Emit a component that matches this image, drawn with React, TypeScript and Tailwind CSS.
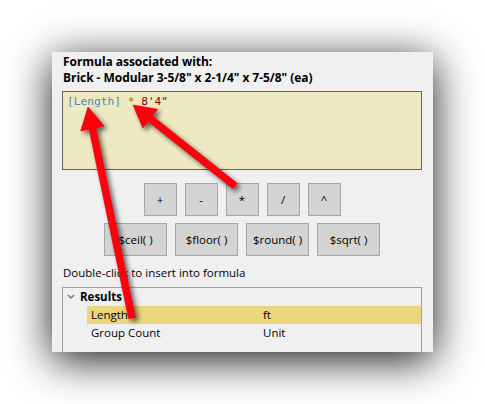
import React from "react";

type Pt = [number, number];

function arrowPoints(tail: Pt, tip: Pt, shaft = 7, headW = 24, headL = 22): string {
  const dx = tip[0] - tail[0];
  const dy = tip[1] - tail[1];
  const len = Math.hypot(dx, dy);
  const ux = dx / len;
  const uy = dy / len;
  const nx = -uy;
  const ny = ux;
  const bx = tip[0] - ux * headL;
  const by = tip[1] - uy * headL;
  const s = shaft / 2;
  const h = headW / 2;
  const pts: Pt[] = [
    [tail[0] + nx * s, tail[1] + ny * s],
    [bx + nx * s, by + ny * s],
    [bx + nx * h, by + ny * h],
    [tip[0], tip[1]],
    [bx - nx * h, by - ny * h],
    [bx - nx * s, by - ny * s],
    [tail[0] - nx * s, tail[1] - ny * s],
  ];
  return pts.map((p) => `${p[0].toFixed(1)},${p[1].toFixed(1)}`).join(" ");
}

const ui = { fontFamily: '"Open Sans", "Noto Sans", sans-serif' };
const mono = { fontFamily: '"DejaVu Sans Mono", "Liberation Mono", monospace' };

function Btn({ children, wide }: { children: React.ReactNode; wide?: boolean }) {
  return (
    <div
      className={`${wide ? "w-[63px]" : "w-[33px]"} h-[33px] flex items-center justify-center bg-[#d4d4d4] border border-[#a6a6a6] text-[11.5px] text-black`}
    >
      {children}
    </div>
  );
}

export default function App() {
  const a1 = arrowPoints([132, 318], [88, 107]);
  const a2 = arrowPoints([235, 186], [133, 105]);
  return (
    <div className="relative w-[485px] h-[404px] bg-white overflow-hidden" style={ui}>
      <div className="pl-[52px] pt-[52px]">
        <div className="w-[381px] h-[300px] bg-[#f0f0f0] overflow-hidden shadow-[0_8px_40px_rgba(0,0,0,0.9)]">
          <div className="pl-[11px] pt-[2px] text-[12px] leading-[16px] font-bold text-black tracking-[-0.05px]">
            <div>Formula associated with:</div>
            <div>Brick - Modular 3-5/8" x 2-1/4" x 7-5/8" (ea)</div>
          </div>
          <div className="ml-[10px] mt-[5px] w-[360px] h-[79px] border border-[#646464] bg-[#efe9c1] px-[4px] pt-[2px]">
            <div className="text-[11.2px] leading-[15px]" style={mono}>
              <span className="text-[#5287b8]">[Length]</span>
              <span> </span>
              <span className="text-[#8a6a10]">*</span>
              <span> </span>
              <span className="text-[#800000]">8'4"</span>
            </div>
          </div>
          <div className="ml-[10px] w-[360px] mt-[13px] flex justify-center gap-[8px]">
            <Btn>+</Btn>
            <Btn>-</Btn>
            <Btn>*</Btn>
            <Btn>/</Btn>
            <Btn>^</Btn>
          </div>
          <div className="ml-[10px] w-[360px] mt-[7px] flex justify-center gap-[8px]">
            <Btn wide>$ceil( )</Btn>
            <Btn wide>$floor( )</Btn>
            <Btn wide>$round( )</Btn>
            <Btn wide>$sqrt( )</Btn>
          </div>
          <div className="pl-[11px] mt-[9px] text-[11.5px] leading-[15px] text-black">
            Double-click to insert into formula
          </div>
          <div className="ml-[10px] mt-[7px] w-[360px] h-[80px] border border-[#a0a0a8] bg-[#f0f0f0] text-[11.5px] text-black">
            <div className="flex items-center h-[18px]">
              <svg width="8" height="6" viewBox="0 0 8 6" className="ml-[4px] mr-[5px]">
                <path d="M1 1 L4 4 L7 1" stroke="#7a7a7a" strokeWidth="1.5" fill="none" />
              </svg>
              <span className="font-bold">Results</span>
            </div>
            <div className="ml-[24px] h-[18px] flex items-center bg-[#ebd67b]">
              <span className="pl-[4px] w-[176px]">Length</span>
              <span>ft</span>
            </div>
            <div className="ml-[24px] h-[18px] flex items-center">
              <span className="pl-[4px] w-[176px]">Group Count</span>
              <span>Unit</span>
            </div>
          </div>
        </div>
      </div>
      <svg className="absolute left-0 top-0" width="485" height="404" viewBox="0 0 485 404">
        <defs>
          <filter id="sh" x="-30%" y="-30%" width="160%" height="160%">
            <feGaussianBlur in="SourceAlpha" stdDeviation="2.5" />
            <feOffset dx="3" dy="3" result="b" />
            <feComponentTransfer>
              <feFuncA type="linear" slope="0.6" />
            </feComponentTransfer>
            <feMerge>
              <feMergeNode />
              <feMergeNode in="SourceGraphic" />
            </feMerge>
          </filter>
        </defs>
        <g filter="url(#sh)">
          <polygon points={a1} fill="#ff0010" stroke="#d8000c" strokeWidth="0.6" strokeLinejoin="round" />
          <polygon points={a2} fill="#ff0010" stroke="#d8000c" strokeWidth="0.6" strokeLinejoin="round" />
        </g>
      </svg>
    </div>
  );
}
